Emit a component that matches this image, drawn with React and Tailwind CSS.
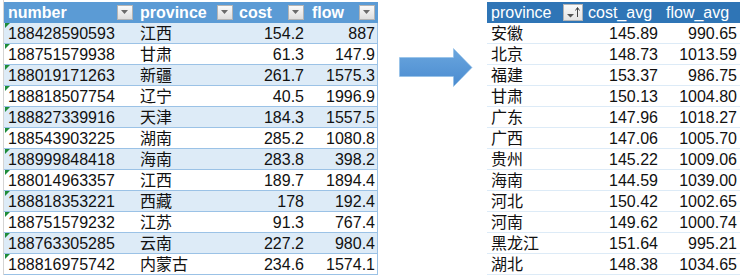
const rawRows = [
  ['188428590593', '江西', '154.2', '887'],
  ['188751579938', '甘肃', '61.3', '147.9'],
  ['188019171263', '新疆', '261.7', '1575.3'],
  ['188818507754', '辽宁', '40.5', '1996.9'],
  ['188827339916', '天津', '184.3', '1557.5'],
  ['188543903225', '湖南', '285.2', '1080.8'],
  ['188999848418', '海南', '283.8', '398.2'],
  ['188014963357', '江西', '189.7', '1894.4'],
  ['188818353221', '西藏', '178', '192.4'],
  ['188751579232', '江苏', '91.3', '767.4'],
  ['188763305285', '云南', '227.2', '980.4'],
  ['188816975742', '内蒙古', '234.6', '1574.1'],
];

const avgRows = [
  ['安徽', '145.89', '990.65'],
  ['北京', '148.73', '1013.59'],
  ['福建', '153.37', '986.75'],
  ['甘肃', '150.13', '1004.80'],
  ['广东', '147.96', '1018.27'],
  ['广西', '147.06', '1005.70'],
  ['贵州', '145.22', '1009.06'],
  ['海南', '144.59', '1039.00'],
  ['河北', '150.42', '1002.65'],
  ['河南', '149.62', '1000.74'],
  ['黑龙江', '151.64', '995.21'],
  ['湖北', '148.38', '1034.65'],
];

const font = "font-['Liberation_Sans','Noto_Sans_CJK_SC',sans-serif]";

function FilterButton() {
  return (
    <div className="w-[16px] h-[15px] border border-[#b4b4b4] bg-gradient-to-b from-[#fafafa] to-[#dedede] flex items-center justify-center">
      <svg width="8" height="5" viewBox="0 0 8 5">
        <path d="M0 0 H7 L3.5 4 Z" fill="#6a6a6a" />
      </svg>
    </div>
  );
}

function SortButton() {
  return (
    <div className="w-[20px] h-[17px] border border-[#b4b4b4] bg-gradient-to-b from-[#fafafa] to-[#e4e4e4] flex items-center justify-center">
      <svg width="16" height="13" viewBox="0 0 16 13">
        <path d="M2 8 H9 L5.5 11.5 Z" fill="#555" />
        <path d="M12.5 11 V2 M10.5 4.5 L12.5 1.5 L14.5 4.5" stroke="#444" strokeWidth="1" fill="none" />
      </svg>
    </div>
  );
}

function HeaderCell({ label, width, textPad }) {
  return (
    <div className={`flex items-center justify-between pr-[3px] ${width}`}>
      <span className={`${textPad} pt-[1px]`}>{label}</span>
      <FilterButton />
    </div>
  );
}

function SourceTable() {
  return (
    <div className="w-[374px] text-[16px]">
      <div className="flex h-[21px] bg-[#5b9bd5] text-white font-bold leading-[20px]">
        <HeaderCell label="number" width="w-[132px]" textPad="pl-[4px]" />
        <HeaderCell label="province" width="w-[100px]" textPad="pl-[4px]" />
        <HeaderCell label="cost" width="w-[71px]" textPad="pl-[3px]" />
        <HeaderCell label="flow" width="w-[71px]" textPad="pl-[5px]" />
      </div>
      {rawRows.map((r, i) => (
        <div
          key={i}
          className={`flex h-[21px] pt-[1px] leading-[19px] border-b border-r border-[#9bc2e6] text-[#111] ${i % 2 === 0 ? 'bg-[#ddebf7]' : 'bg-white'}`}
        >
          <div className="relative w-[132px] pl-[4px]">
            <span className="absolute left-[1px] top-[-1px] w-0 h-0 border-t-[5px] border-r-[5px] border-t-[#1e8c3a] border-r-transparent" />
            {r[0]}
          </div>
          <div className="w-[100px] pl-[4px]">{r[1]}</div>
          <div className="w-[71px] pr-[3px] text-right">{r[2]}</div>
          <div className="w-[70px] pr-[2px] text-right">{r[3]}</div>
        </div>
      ))}
    </div>
  );
}

function Arrow() {
  return (
    <svg width="74" height="39" viewBox="0 0 74 39" className="mt-[48px] ml-[21px] shrink-0">
      <defs>
        <linearGradient id="arrowFill" x1="0" y1="0" x2="0" y2="1">
          <stop offset="0" stopColor="#6aa6de" />
          <stop offset="1" stopColor="#4a8bd0" />
        </linearGradient>
      </defs>
      <path d="M0.5 9.5 H54.5 V0.5 L73 19.5 L54.5 38.5 V28.5 H0.5 Z" fill="url(#arrowFill)" stroke="#8dbde8" strokeWidth="0.6" />
    </svg>
  );
}

function SummaryTable() {
  return (
    <div className="ml-[14px] mt-[2px] w-[253px] shrink-0 text-[16px]">
      <div className="flex h-[21px] bg-[#2f75b6] text-white leading-[20px]">
        <div className="w-[98px] flex items-center justify-between pr-[2px]">
          <span className="pl-[4px] pt-[1px]">province</span>
          <SortButton />
        </div>
        <div className="w-[76px] pl-[3px] pt-[1px]">cost_avg</div>
        <div className="w-[79px] pl-[5px] pt-[1px]">flow_avg</div>
      </div>
      {avgRows.map((r, i) => (
        <div key={i} className="flex h-[21px] pt-[1px] leading-[19px] border-b border-[#ddebf7] text-[#111]">
          <div className="w-[98px] pl-[4px]">{r[0]}</div>
          <div className="w-[76px] pr-[3px] text-right">{r[1]}</div>
          <div className="w-[79px] pr-[3px] text-right">{r[2]}</div>
        </div>
      ))}
    </div>
  );
}

export default function App() {
  return (
    <div className={`w-[740px] h-[275px] overflow-hidden bg-white flex items-start ${font}`}>
      <div className="ml-[3px] h-[275px] pt-[2px] border-l border-[#d4d4d4] shrink-0">
        <SourceTable />
      </div>
      <Arrow />
      <SummaryTable />
    </div>
  );
}
